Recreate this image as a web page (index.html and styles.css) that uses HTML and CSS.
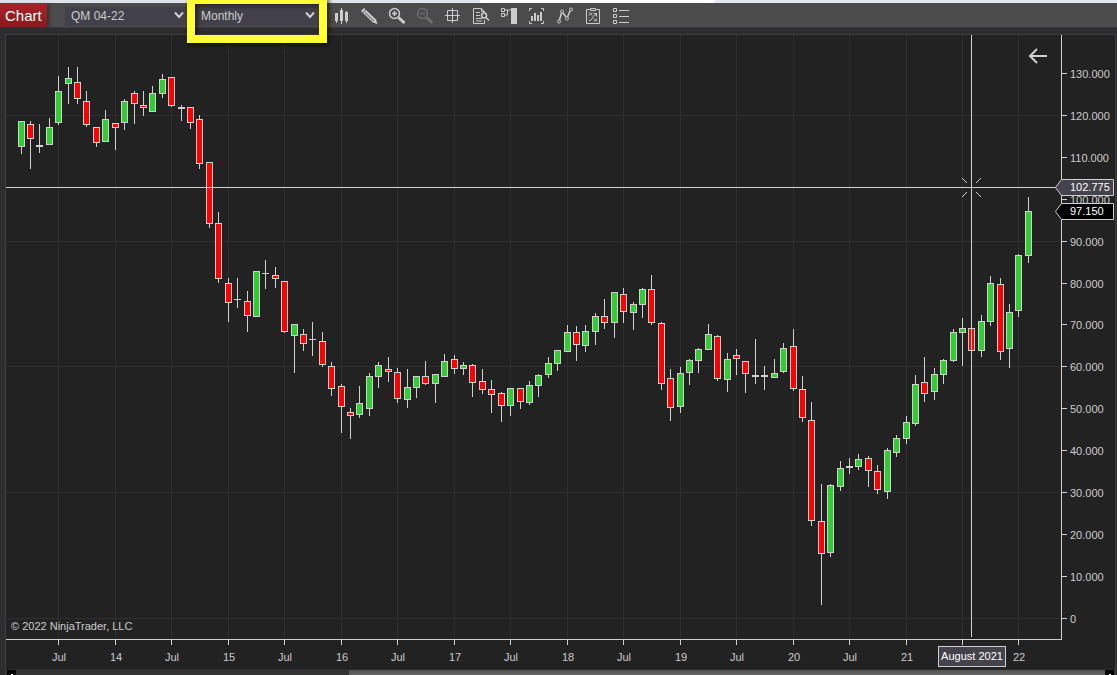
FILE: index.html
```html
<!DOCTYPE html>
<html lang="en">
  <head>
    <meta charset="UTF-8" />
    <meta name="viewport" content="width=device-width, initial-scale=1.0" />
    <title>Chart - QM 04-22</title>
    <link rel="stylesheet" href="styles.css">
  </head>
  <body>
    <div class="window-edge"></div>
    <header class="toolbar">
      <h1 class="title">Chart</h1>
      <div class="picker instrument">
        <select aria-label="Instrument">
          <option>QM 04-22</option>
        </select>
        <svg class="chevron" viewBox="0 0 10 8"><path d="M1 1.5 5 6 9 1.5" /></svg>
      </div>
      <div class="picker interval">
        <select aria-label="Interval">
          <option>Monthly</option>
          <option>Weekly</option>
          <option>Daily</option>
        </select>
        <svg class="chevron" viewBox="0 0 10 8"><path d="M1 1.5 5 6 9 1.5" /></svg>
        <div class="highlight"></div>
      </div>
      <nav class="tools">
        <button aria-label="Chart style">
          <svg viewBox="0 0 18 18"><path class="solid" d="M3 7h3v8H5v2H4v-2H3zM8 4h1V2h1v2h1v11h-1v3H9v-3H8zM13 6h1V5h1v1h1v9h-1v2h-1v-2h-1z" /></svg>
        </button>
        <button aria-label="Drawing tools">
          <svg viewBox="0 0 18 18"><path class="solid" d="M1 5 4 2l1.500 1.500-3 3zM3 7l3-3 10 9.500 1.500 4.500-4.500-1.500z" /><path class="cut" d="M5 6.500 14 15" /></svg>
        </button>
        <button aria-label="Zoom in">
          <svg viewBox="0 0 18 18"><circle class="lens" cx="6.500" cy="7.500" r="5" /><path class="lens" d="M6.500 5v5M4 7.500h5" /><path class="thick" d="M10.500 11.500l6 5.500" /></svg>
        </button>
        <button aria-label="Zoom out" disabled>
          <svg viewBox="0 0 18 18"><circle class="lens" cx="6.500" cy="7.500" r="5" /><path class="lens" d="M4 7.500h5" /><path class="thick" d="M10.500 11.500l6 5.500" /></svg>
        </button>
        <button aria-label="Crosshair">
          <svg viewBox="0 0 18 18"><path d="M3.500 4.500h10v10h-10zM1 9.500h15M8.500 2v15" /></svg>
        </button>
        <button aria-label="Data box">
          <svg viewBox="0 0 18 18"><path d="M12.500 14v3.500h-11v-15h8l3 3v1M9.500 2.500v3h3M4 6.500h4M4 9.500h4M4 12.500h6M4 15h6" /><circle class="lens" cx="12" cy="9.500" r="2.500" /><path class="lens" d="M14 11.500l3 3" /></svg>
        </button>
        <button aria-label="Chart trader">
          <svg viewBox="0 0 18 18"><path d="M1.500 2.500h3v3h-3zM1.500 7.500h3v3h-3zM5 4h6M5 9h2.500V4" /><path class="solid" d="M11 2h6v16h-6z" /></svg>
        </button>
        <button aria-label="Data series">
          <svg viewBox="0 0 18 18"><path d="M4 2.500H1.500V5M13 2.500h2.500V5M1.500 15v2.500H4M15.500 15v2.500H13" /><path class="solid" d="M3 10h2v5H3zM6 7h2v8H6zM9 9h2v6H9zM12 6h2v9h-2z" /></svg>
        </button>
        <button aria-label="Indicators">
          <svg viewBox="0 0 18 18"><path class="lens" d="M3.500 14 5.500 7M7 7l3 4M11.500 11 14 5" /><circle cx="3" cy="15.500" r="1.500" /><circle cx="6" cy="5.500" r="1.500" /><circle cx="11" cy="12.500" r="1.500" /><circle cx="15" cy="3.500" r="1.500" /></svg>
        </button>
        <button aria-label="Strategies">
          <svg viewBox="0 0 18 18"><path d="M6 3.500H2.500v14h13v-14H12M6.500 2.500h5v2h-5zM5 6.500l3 3M8 6.500l-3 3M10 12.500l3 3M13 12.500l-3 3M5 14.500c4 0 2-4 7-6M9.500 7.500h3v3" /></svg>
        </button>
        <button aria-label="Properties">
          <svg viewBox="0 0 18 18"><path d="M1.500 2.500h3v3h-3zM1.500 8.500h3v3h-3zM1.500 14.500h3v3h-3zM7 4.500h10M7 10.500h10M7 16.500h10" /></svg>
        </button>
      </nav>
    </header>

    <main class="panel">
      <div class="chart">
        <svg id="chart" role="img" aria-label="QM 04-22 monthly candles"></svg>
        <button class="back" aria-label="Return to last bar">
          <svg viewBox="0 0 20 16"><path d="M19 8H2M9 1 2 8l7 7" /></svg>
        </button>
      </div>
      <div class="scrollbar">
        <span class="arrow"></span>
        <span class="track"></span>
        <span class="thumb"></span>
        <span class="arrow"></span>
      </div>
    </main>

    <script src="chart.js"></script>
  </body>
</html>
```

FILE: styles.css
```css
* {
  margin: 0;
  padding: 0;
  box-sizing: border-box;
}
body {
  font-family: "Liberation Sans", Arial, sans-serif;
  display: flex;
  flex-direction: column;
  height: 100vh;
  overflow: hidden;
  background: #2d2d30;
  color: #cccccc;
}
.window-edge {
  height: 3px;
  background: linear-gradient(90deg, #dfe4ec 43%, #ffffff 43%, #ffffff 64%, #e4e8ef 64%);
}
.toolbar {
  display: flex;
  align-items: center;
  height: 25px;
  background: #4b4b4b;
  border-bottom: 1px solid #3a3a3b;
}
.title {
  width: 47px;
  height: 23px;
  padding-left: 5px;
  font-size: 15px;
  font-weight: normal;
  line-height: 23px;
  color: #ffffff;
  background: linear-gradient(#a92328, #851a1e);
  box-shadow: 2px 1px 3px #303030;
}
.picker {
  position: relative;
  height: 19px;
}
.instrument {
  width: 122px;
  margin-left: 18px;
}
.interval {
  width: 124px;
  margin-left: 8px;
}
.picker select {
  appearance: none;
  width: 100%;
  height: 19px;
  padding: 0 6px;
  border: none;
  background: #424149;
  color: #cccccc;
  font-family: inherit;
  font-size: 12px;
  line-height: 19px;
}
.chevron {
  position: absolute;
  top: 5px;
  right: 3px;
  width: 10px;
  height: 8px;
  fill: none;
  stroke: #d0d0d0;
  stroke-width: 2;
  pointer-events: none;
}
.interval .chevron {
  right: 4px;
}
.highlight {
  position: absolute;
  top: -10px;
  left: -8px;
  right: -8px;
  height: 47px;
  border: 8px solid #ffff33;
  filter: drop-shadow(2px 2px 2px rgba(0, 0, 0, 0.6));
  pointer-events: none;
  z-index: 10;
}
.tools {
  display: flex;
  margin-left: 8px;
}
.tools button {
  display: flex;
  align-items: center;
  justify-content: center;
  width: 28px;
  height: 20px;
  border: none;
  background: none;
  color: #cccccc;
}
.tools button:disabled {
  color: #6c6c6c;
}
.tools svg {
  width: 18px;
  height: 18px;
  fill: none;
  stroke: currentColor;
}
.tools .solid {
  fill: currentColor;
  stroke: none;
}
.tools .lens {
  stroke-width: 1.5;
}
.tools .thick {
  stroke-width: 3;
}
.tools .cut {
  stroke: #4b4b4b;
}
.panel {
  flex: 1;
  display: flex;
  flex-direction: column;
  min-height: 0;
  margin: 6px 1px 0 5px;
  border: 1px solid #3f3f40;
  border-bottom: none;
  background: #222222;
}
.chart {
  position: relative;
  flex: 1;
  min-height: 0;
}
.chart > svg {
  display: block;
  width: 100%;
  height: 100%;
  font-size: 11px;
}
.back {
  position: absolute;
  top: 13px;
  right: 67px;
  width: 20px;
  height: 16px;
  border: none;
  background: none;
}
.back svg {
  display: block;
  fill: none;
  stroke: #d0d0d0;
  stroke-width: 2;
}
.grid {
  fill: #2f2f2f;
}
.line {
  fill: #d0d0d0;
}
.up,
.down {
  stroke: #d0d0d0;
}
.up {
  fill: #32cd32;
}
.down {
  fill: #ff0000;
}
.label {
  fill: #cccccc;
}
.middle {
  text-anchor: middle;
}
.marker {
  fill: #44434b;
  stroke: #d0d0d0;
}
.marker.last {
  fill: #000000;
}
.marker-text {
  fill: #ffffff;
}
.spark {
  fill: none;
  stroke: #d0d0d0;
}
.scrollbar {
  display: flex;
  height: 6px;
  padding: 0 1px;
  border-top: 1px solid #2b2b2b;
  background: #333333;
}
.arrow {
  position: relative;
  width: 9px;
  background: #000000;
}
.arrow::after {
  content: "";
  position: absolute;
  left: 4px;
  top: 4px;
  width: 2px;
  height: 1px;
  background: #ffffff;
}
.track {
  flex: 333;
}
.thumb {
  flex: 756;
  background: linear-gradient(#505050, #666666);
}
```

FILE: chart.js
```js
const svg = document.getElementById("chart");

// drawing units of the plot, scaled to the size of the panel
const PLOT_WIDTH = 1055;
const PLOT_HEIGHT = 604;
const TOP = 35;
const PRICE_AXIS = 54;
const TIME_AXIS = 30;

// high, open/close top, open/close bottom, low, direction
const bars = [
  [121, 121, 147, 154, "u"], [121, 124, 139, 169, "d"], [124, 145, 147, 153, "-"],
  [118, 127, 145, 145, "u"], [76, 91, 123, 125, "u"], [67, 78, 84, 104, "u"],
  [67, 82, 99, 104, "d"], [91, 101, 125, 127, "d"], [127, 127, 143, 147, "d"],
  [110, 119, 142, 142, "u"], [123, 123, 128, 150, "d"], [99, 101, 123, 130, "u"],
  [91, 93, 104, 124, "d"], [91, 105, 108, 116, "d"], [86, 93, 112, 112, "u"],
  [74, 79, 94, 98, "u"], [77, 77, 106, 107, "d"], [105, 107, 109, 121, "-"],
  [107, 107, 123, 129, "d"], [115, 119, 164, 169, "d"], [162, 162, 224, 228, "d"],
  [212, 223, 279, 283, "d"], [278, 283, 303, 322, "d"], [278, 299, 300, 308, "-"],
  [291, 301, 316, 332, "d"], [271, 271, 317, 317, "u"], [260, 273, 274, 289, "-"],
  [267, 275, 279, 288, "d"], [281, 281, 332, 333, "d"], [324, 324, 336, 373, "u"],
  [329, 334, 344, 351, "d"], [322, 339, 340, 356, "-"], [332, 341, 365, 367, "d"],
  [362, 366, 389, 396, "d"], [384, 386, 407, 433, "d"], [408, 412, 416, 439, "d"],
  [386, 403, 415, 418, "u"], [373, 376, 409, 416, "u"], [362, 365, 377, 388, "u"],
  [357, 369, 372, 382, "d"], [368, 372, 399, 403, "d"], [369, 387, 400, 408, "u"],
  [376, 376, 388, 398, "u"], [361, 376, 384, 385, "d"], [374, 374, 384, 403, "u"],
  [354, 361, 377, 377, "u"], [355, 359, 369, 374, "d"], [362, 365, 369, 375, "u"],
  [364, 365, 383, 397, "d"], [369, 381, 390, 394, "d"], [380, 389, 395, 413, "d"],
  [392, 393, 406, 422, "d"], [388, 388, 406, 416, "u"], [388, 388, 402, 409, "d"],
  [381, 385, 403, 405, "u"], [374, 375, 386, 397, "u"], [357, 363, 375, 378, "u"],
  [350, 350, 364, 371, "u"], [325, 332, 352, 352, "u"], [326, 332, 345, 361, "d"],
  [325, 331, 346, 352, "u"], [313, 316, 332, 345, "u"], [299, 316, 323, 329, "d"],
  [292, 292, 323, 338, "u"], [288, 294, 312, 323, "d"], [302, 304, 313, 330, "u"],
  [288, 289, 305, 318, "u"], [275, 289, 323, 325, "d"], [322, 323, 384, 390, "d"],
  [369, 378, 408, 421, "d"], [367, 373, 407, 413, "u"], [359, 360, 373, 385, "u"],
  [348, 349, 361, 373, "u"], [324, 334, 350, 350, "u"], [335, 336, 379, 381, "d"],
  [353, 359, 380, 392, "u"], [349, 355, 359, 375, "d"], [361, 361, 374, 393, "d"],
  [339, 375, 377, 384, "-"], [366, 375, 377, 390, "-"], [359, 373, 378, 378, "u"],
  [343, 348, 372, 373, "u"], [329, 346, 389, 391, "d"], [376, 389, 418, 422, "d"],
  [402, 420, 521, 526, "d"], [484, 521, 554, 605, "d"], [484, 485, 553, 557, "u"],
  [461, 468, 487, 491, "u"], [458, 466, 468, 474, "-"], [454, 459, 467, 470, "u"],
  [456, 458, 471, 487, "d"], [465, 471, 490, 494, "d"], [448, 450, 492, 499, "u"],
  [435, 438, 453, 457, "u"], [416, 422, 439, 444, "u"], [375, 384, 424, 426, "u"],
  [357, 382, 394, 402, "d"], [368, 374, 392, 400, "u"], [359, 360, 375, 384, "u"],
  [329, 332, 361, 362, "u"], [318, 328, 333, 366, "u"], [328, 328, 351, 351, "d"],
  [315, 321, 351, 357, "u"], [276, 283, 322, 326, "u"], [278, 284, 352, 360, "d"],
  [304, 312, 349, 368, "u"], [254, 255, 311, 317, "u"], [197, 211, 256, 263, "u"],
];

function add(name, attrs, text) {
  const node = document.createElementNS("http://www.w3.org/2000/svg", name);
  for (const key in attrs) node.setAttribute(key, attrs[key]);
  if (text !== undefined) node.textContent = text;
  svg.appendChild(node);
}

function rect(x, y, width, height, cls) {
  add("rect", { x, y, width, height, class: cls });
}

function label(x, y, text, cls = "label") {
  add("text", { x, y, class: cls }, text);
}

function draw() {
  svg.textContent = "";
  const w = svg.clientWidth - PRICE_AXIS;
  const h = svg.clientHeight - TIME_AXIS;
  const barX = (i) => Math.floor(((15.09 + 9.414 * i) * w) / PLOT_WIDTH);
  const toY = (y) => Math.floor(((y - TOP) * h) / PLOT_HEIGHT);
  const priceY = (price) => toY(618.4 - price * 4.192);

  // grid
  for (let i = 4; i < bars.length; i += 6) rect(barX(i), 0, 1, h - 2, "grid");
  for (let p = 0; p <= 120; p += 30) rect(1, priceY(p), w - 2, 1, "grid");
  label(5, h - 9, "© 2022 NinjaTrader, LLC");

  // candles
  bars.forEach(([high, top, bottom, low, dir], i) => {
    const x = barX(i);
    rect(x, toY(high), 1, toY(low) - toY(high), "line");
    const height = toY(bottom) - toY(top);
    if (dir === "-") {
      rect(x - 3, toY(top), 7, height, "line");
    } else {
      rect(x - 2.5, toY(top) + 0.5, 6, height - 1, dir === "u" ? "up" : "down");
    }
  });

  // axes
  rect(w, 0, 1, h + 1, "line");
  rect(0, h, w, 1, "line");
  for (let p = 0; p <= 130; p += 10) {
    rect(w + 1, priceY(p), 5, 1, "line");
    label(w + 9, priceY(p) + 5, p === 0 ? "0" : p.toFixed(3));
  }
  for (let i = 4; i < bars.length; i += 6) {
    rect(barX(i), h + 1, 1, 5, "line");
    const july = i % 12 === 4;
    // the date marker covers the label of bar 100
    if (i !== 100) {
      label(barX(i) + 1, h + 22, july ? "Jul" : 14 + (i - 10) / 12, "label middle");
    }
  }

  // crosshair
  const cx = barX(101);
  const cy = toY(187);
  rect(cx, 0, 1, h - 2, "line");
  rect(0, cy, w, 1, "line");
  add("path", {
    class: "spark",
    d: `M${cx - 9} ${cy - 9}l5 5M${cx + 10} ${cy - 9}l-5 5M${cx - 9} ${cy + 10}l5 -5M${cx + 10} ${cy + 10}l-5 -5`,
  });

  // price and date markers
  marker(w, cy, "102.775", "marker");
  marker(w, toY(211), "97.150", "marker last");
  add("rect", { x: cx - 32.5, y: h + 7.5, width: 67, height: 20, class: "marker" });
  label(cx + 1, h + 21, "August 2021", "marker-text middle");
}

function marker(x, y, text, cls) {
  add("path", { class: cls, d: `M${x - 5.5} ${y + 0.5}l6 -8h52v16h-52z` });
  label(x + 9, y + 4, text, "marker-text");
}

draw();
window.addEventListener("resize", draw);
```
